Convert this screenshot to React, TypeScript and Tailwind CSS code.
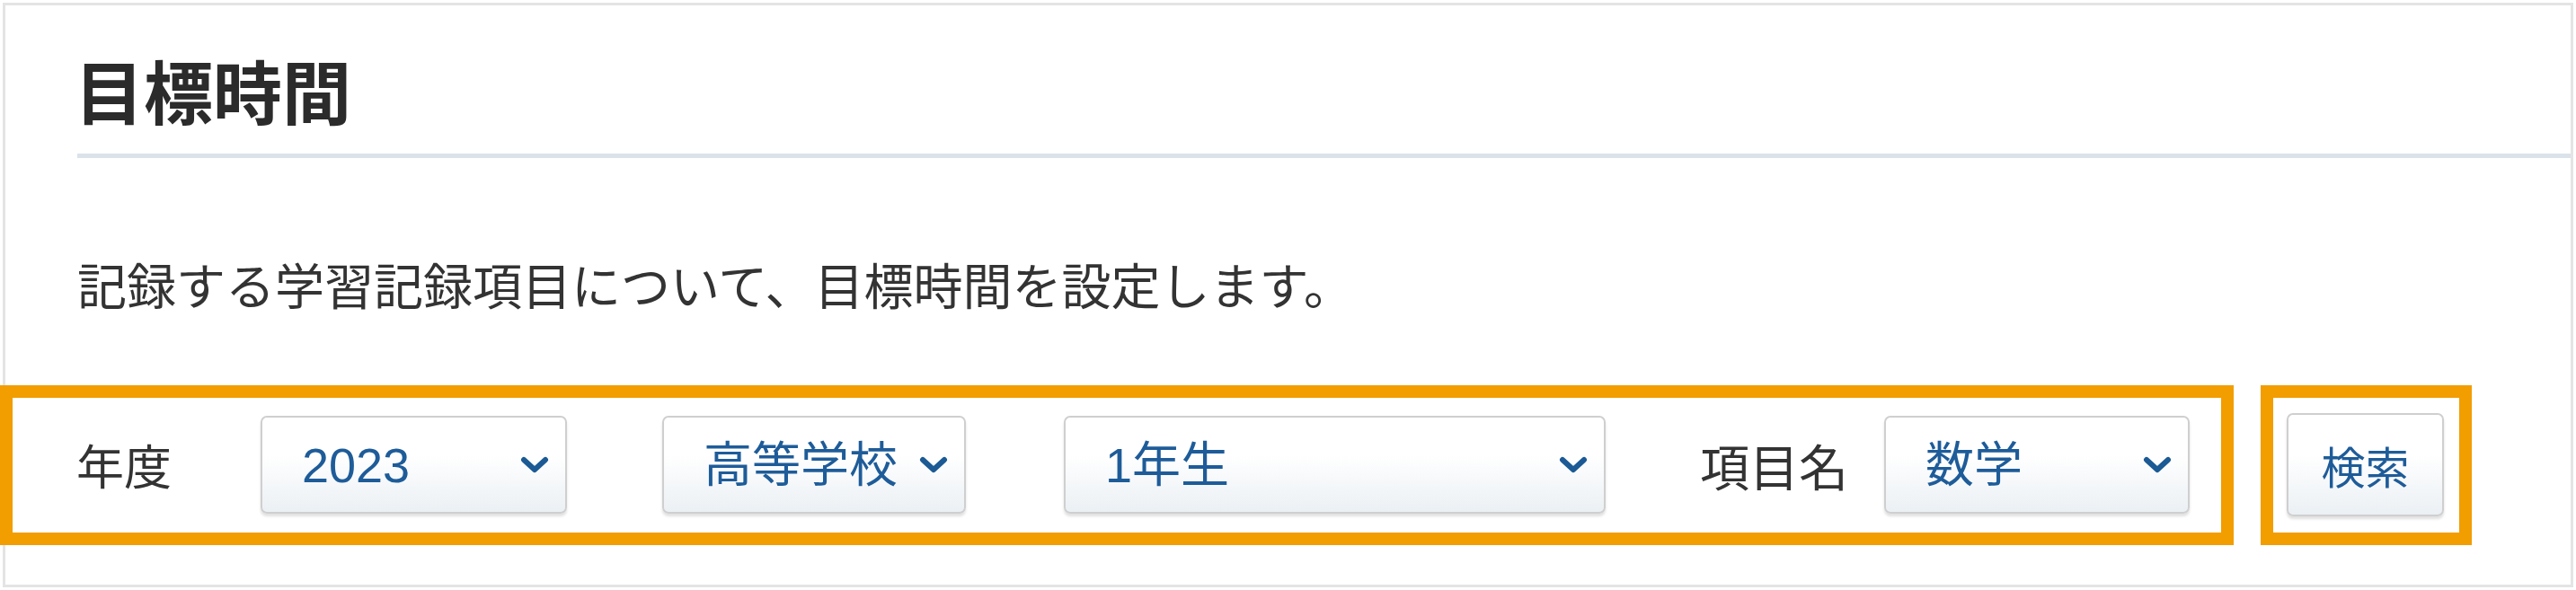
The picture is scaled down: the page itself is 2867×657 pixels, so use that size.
import React from "react";

const jp = "font-['Meiryo','Noto_Sans_CJK_JP',sans-serif]";

function Chevron() {
  return (
    <svg width="32" height="22" viewBox="0 0 32 22" fill="none">
      <path d="M4 5 L16 16 L28 5" stroke="#1b5a94" strokeWidth="6" strokeLinecap="round" strokeLinejoin="round" />
    </svg>
  );
}

function Select({ value, width }: { value: string; width: string }) {
  return (
    <div
      className={`${width} h-[109px] shrink-0 flex items-center justify-between pl-[44px] pr-[18px] rounded-[7px] border-2 border-[#cfcfcf] bg-gradient-to-b from-white from-40% to-[#ebf0f4] shadow-[0_3px_3px_rgba(0,0,0,0.12)]`}
    >
      <span className="text-[54px] leading-none text-[#1e5c99] font-['Liberation_Sans','Noto_Sans_CJK_JP',sans-serif]">
        {value}
      </span>
      <Chevron />
    </div>
  );
}

export default function App() {
  return (
    <div className={`w-[2867px] h-[657px] bg-white p-[3px] ${jp}`}>
      <div className="h-[651px] border-[3px] border-[#e4e4e4] pl-[80px] overflow-visible">
        {/* header */}
        <div className="pt-[48px] pb-[25px] border-b-[5px] border-[#dbe2ea]">
          <h1 className="text-[77px] leading-[1.2] font-bold text-[#2b2b2b] ml-[-3px]">目標時間</h1>
        </div>

        <p className="mt-[98px] text-[55px] leading-[1.5] text-[#333]">
          記録する学習記録項目について、目標時間を設定します。
        </p>

        {/* search form */}
        <div className="mt-[72px] ml-[-86px] flex gap-[30px]">
          <div className="w-[2486px] h-[178px] border-[14px] border-[#f29d00] flex items-center pl-[71px] pr-[34px] text-[#333]">
            <span className="text-[53px] leading-none mr-[99px]">年度</span>
            <Select value="2023" width="w-[341px]" />
            <div className="w-[106px] shrink-0" />
            <Select value="高等学校" width="w-[338px]" />
            <div className="w-[109px] shrink-0" />
            <Select value="1年生" width="w-[603px]" />
            <span className="text-[55px] leading-none ml-[105px] mr-[40px]">項目名</span>
            <Select value="数学" width="w-[340px]" />
          </div>
          <div className="w-[235px] h-[178px] border-[14px] border-[#f29d00] flex items-center pl-[15px]">
            <button className="w-[175px] h-[115px] rounded-[7px] border-2 border-[#cfcfcf] bg-gradient-to-b from-white from-40% to-[#ebf0f4] shadow-[0_3px_3px_rgba(0,0,0,0.12)] text-[49px] text-[#1e5c99]">
              検索
            </button>
          </div>
        </div>
      </div>
    </div>
  );
}
